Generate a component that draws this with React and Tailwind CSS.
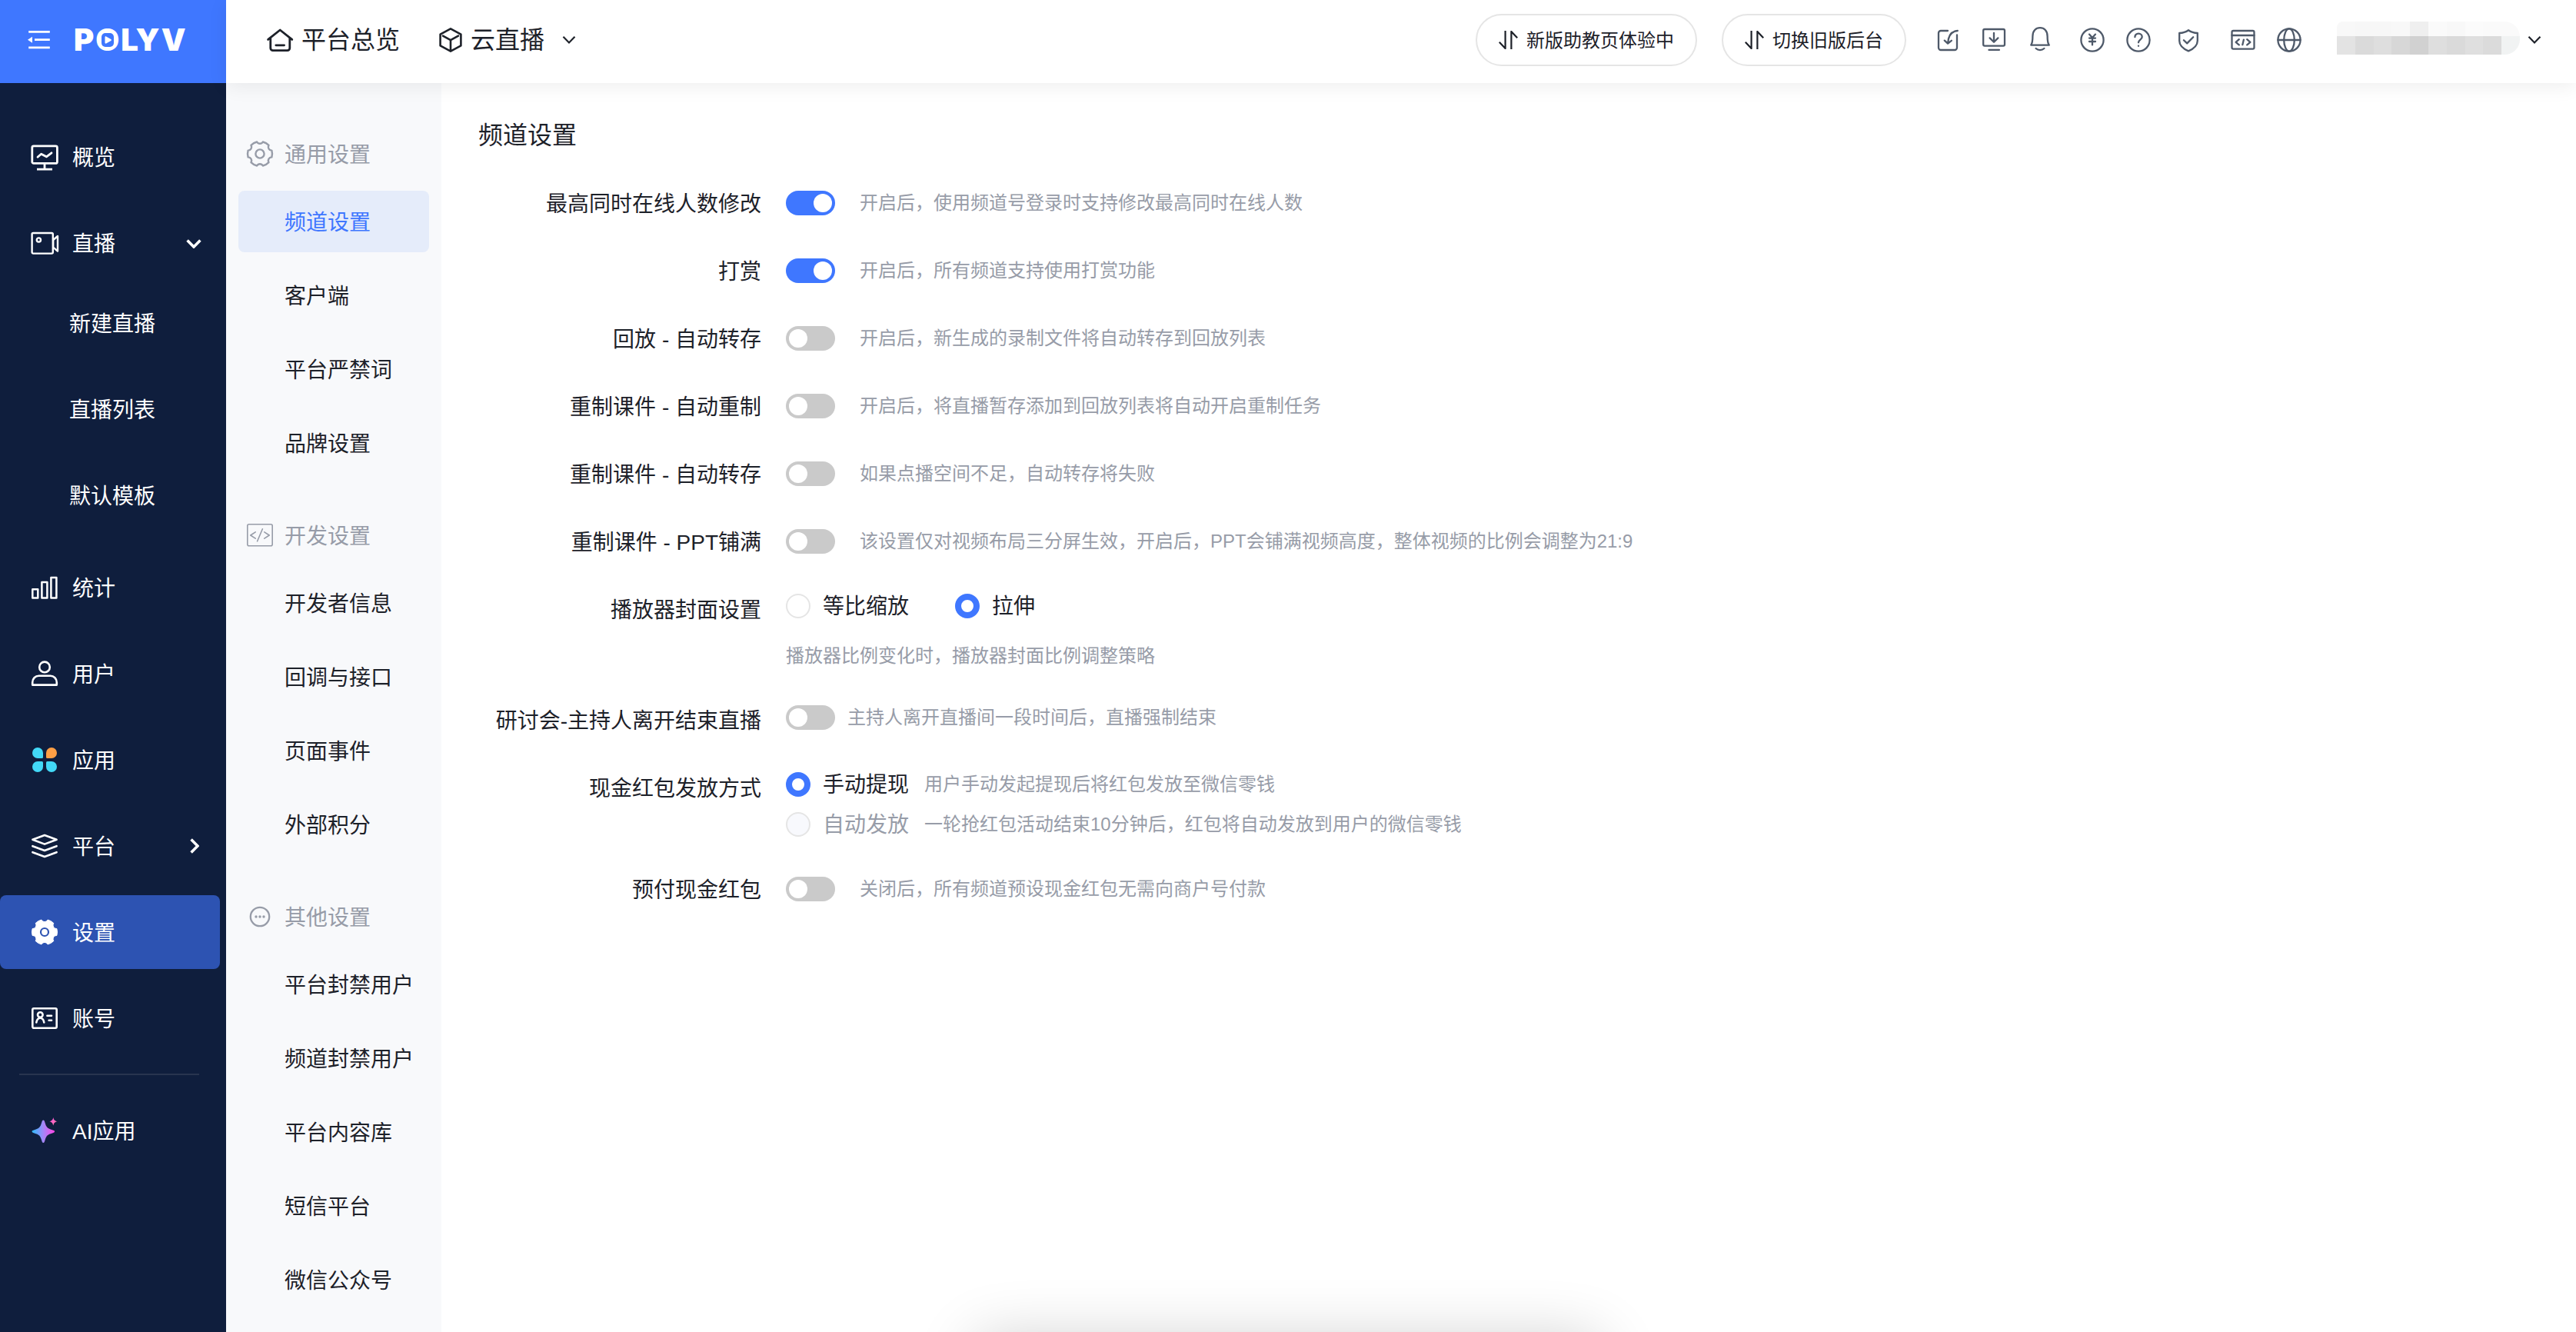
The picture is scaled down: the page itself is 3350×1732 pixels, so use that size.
import React from "react";

const rad = (deg) => (deg * Math.PI) / 180;

// Six-toothed gear outline: outer arcs joined by shallow concave notches.
function gearPath(c, R, half, bite) {
  const pt = (deg) => `${(c + R * Math.cos(rad(deg))).toFixed(2)} ${(c + R * Math.sin(rad(deg))).toFixed(2)}`;
  let d = `M${pt(-30 + half)}`;
  for (let k = 0; k < 6; k++) {
    const notch = 30 + 60 * k;
    d += `A${R} ${R} 0 0 1 ${pt(notch - half)}`;
    d += `A${bite} ${bite} 0 0 0 ${pt(notch + half)}`;
  }
  return d + "Z";
}

function Icon({ size = 36, sw = 2.8, className = "", children }) {
  return (
    <svg
      width={size}
      height={size}
      viewBox={`0 0 ${size} ${size}`}
      fill="none"
      stroke="currentColor"
      strokeWidth={sw}
      strokeLinecap="round"
      strokeLinejoin="round"
      className={`shrink-0 overflow-visible ${className}`}
    >
      {children}
    </svg>
  );
}

const navIcons = {
  overview: (
    <Icon>
      <rect x="1.8" y="3.8" width="32.6" height="22.6" rx="2" />
      <path d="M18 27v6.5M8 34.2h20" strokeLinecap="butt" />
      <path d="M9 18.2l4.6-4 6.8 3.6 6.6-5" />
    </Icon>
  ),
  live: (
    <Icon sw={2.4}>
      <rect x="1.6" y="5" width="27.2" height="26.6" rx="1.6" />
      <circle cx="10.4" cy="14" r="2.6" />
      <path d="M29.2 14l5.8-5v19.6l-5.8-5z" />
    </Icon>
  ),
  stats: (
    <Icon sw={2.5}>
      <rect x="2.3" y="20.2" width="7" height="11.4" />
      <rect x="14.4" y="11" width="7" height="20.6" />
      <rect x="26.4" y="5" width="7" height="26.6" />
    </Icon>
  ),
  user: (
    <Icon sw={2.6}>
      <circle cx="18" cy="9.4" r="6.8" />
      <path d="M2.2 32.6V29.4C2.2 24.400 5.800 20.800 10.600 20.800H25.400C30.200 20.800 33.800 24.400 33.800 29.400V32.600Z" />
    </Icon>
  ),
  apps: (
    <svg width="36" height="36" viewBox="0 0 36 36" className="shrink-0">
      <path d="M9 2a7 7 0 0 1 7 7v5.500a1.500 1.500 0 0 1-1.500 1.500h-5.500a7 7 0 0 1 0-14z" fill="#42d9f7" />
      <path d="M27 2a7 7 0 0 1 0 14h-5.500a1.500 1.500 0 0 1-1.500-1.500v-5.500a7 7 0 0 1 7-7z" fill="#ff9f45" />
      <path d="M9 34a7 7 0 0 1 0-14h5.500a1.500 1.500 0 0 1 1.500 1.500v5.500a7 7 0 0 1-7 7z" fill="#42d9f7" />
      <path d="M27 34a7 7 0 0 1-7-7v-5.500a1.500 1.500 0 0 1 1.500-1.500h5.500a7 7 0 0 1 0 14z" fill="#42d9f7" />
    </svg>
  ),
  platform: (
    <Icon sw={2.6}>
      <path d="M2.400 9.800L18 4l15.600 5.800L18 15.600z" />
      <path d="M2.400 18.200L18 24l15.600-5.800" />
      <path d="M2.400 26.200L18 32l15.600-5.800" />
    </Icon>
  ),
  settings: (
    <svg width="36" height="36" viewBox="0 0 36 36" className="shrink-0">
      <path d={gearPath(18, 16.5, 14.5, 4.6)} fill="white" stroke="white" strokeWidth="1" strokeLinejoin="round" />
      <circle cx="18" cy="18" r="5" fill="none" stroke="#2d53b2" strokeWidth="2.200" />
    </svg>
  ),
  account: (
    <Icon sw={2.600}>
      <rect x="2.300" y="5.300" width="31.400" height="25.400" rx="1.600" />
      <circle cx="12.300" cy="13.600" r="3.300" />
      <path d="M7.300 23.400c0.600-3.400 2.500-5.600 5-5.600s4.400 2.200 5 5.600M21.400 14.800h5.600M23.600 20.800h3.400" />
    </Icon>
  ),
  ai: (
    <svg width="36" height="36" viewBox="0 0 36 36" className="shrink-0">
      <defs>
        <linearGradient id="spark" x1="0" x2="1" y1="0" y2="0">
          <stop offset="0" stopColor="#2fbcff" />
          <stop offset="0.500" stopColor="#a387f7" />
          <stop offset="1" stopColor="#ff45e6" />
        </linearGradient>
        <linearGradient id="sparkSmall" x1="0" x2="1" y1="0" y2="1">
          <stop offset="0" stopColor="#ff4fe6" />
          <stop offset="1" stopColor="#ff7fa0" />
        </linearGradient>
      </defs>
      <path d="M16.300 4.600c1.200 0 1.500 1 2.100 3 1.700 6.200 3.400 7.900 9.600 9.600 2 .6 3 .9 3 2.100s-1 1.500-3 2.100c-6.200 1.700-7.900 3.400-9.600 9.600-.6 2-.9 3-2.100 3s-1.500-1-2.100-3c-1.700-6.200-3.400-7.900-9.600-9.600-2-.6-3-.9-3-2.100s1-1.500 3-2.100c6.200-1.700 7.900-3.400 9.600-9.600.6-2 .9-3 2.100-3z" fill="url(#spark)" />
      <path d="M29.300 1c.9 3.400 1.700 4.400 5.100 5.300-3.400.9-4.200 1.900-5.100 5.300-.9-3.400-1.700-4.400-5.100-5.300 3.400-.9 4.200-1.900 5.100-5.300z" fill="url(#sparkSmall)" />
    </svg>
  ),
};

const headerIcons = [
  {
    gap: "ml-[38px]",
    art: (
      <>
        <path d="M16 4H7a3 3 0 0 0-3 3v19a3 3 0 0 0 3 3h18a3 3 0 0 0 3-3V9.500" />
        <path d="M28.800 4c-7 .4-12 5.500-12.600 16M11.800 16.600l4.300 4 4.700-3.800" />
      </>
    ),
  },
  {
    gap: "ml-7",
    art: (
      <>
        <rect x="2.200" y="2" width="27.800" height="21.600" rx="1.800" />
        <path d="M9.500 28.900h13.400M16 6.800v11M10.600 13.400L16 18.800l5.400-5.400" />
      </>
    ),
  },
  {
    gap: "ml-7",
    art: (
      <>
        <path d="M4.200 22.600c2-2.600 2.200-4.600 2.200-11.600C6.400 4.200 10.500.2 16 .2s9.600 4 9.600 10.800c0 7 .2 9 2.200 11.600z" />
        <path d="M10.600 27c3 2.800 7.800 2.800 10.800 0" />
      </>
    ),
  },
  {
    gap: "ml-9",
    art: (
      <>
        <circle cx="16" cy="16" r="14.600" />
        <path d="M12 8.600l4 4.400 4-4.400M16 13v9.400M12 13.600h8M12 18h8" />
      </>
    ),
  },
  {
    gap: "ml-7",
    art: (
      <>
        <circle cx="16" cy="16" r="14.600" />
        <path d="M11.400 12.200c0-2.800 2-4.600 4.600-4.600s4.700 1.800 4.700 4.300c0 3.600-4.700 3.800-4.700 7.400M16 23.700v.1" />
      </>
    ),
  },
  {
    gap: "ml-[33px]",
    art: (
      <>
        <path d="M16 3.200c3.600 2.600 7.600 3.600 11.800 3.800V17c0 6-5.400 10.600-11.800 13.400C9.600 27.600 4.200 23 4.200 17V7C8.400 6.800 12.400 5.800 16 3.200z" />
        <path d="M9.900 16.200l4.300 4.200 8-8.200" />
      </>
    ),
  },
  {
    gap: "ml-[39px]",
    art: (
      <>
        <rect x="1.500" y="4" width="29" height="23.600" rx="1.800" />
        <path d="M1.500 10h29M10.800 15.200l-4.200 3.600 4.200 3.600M21.200 15.200l4.200 3.600-4.200 3.600M16.900 15.600l-1.600 6.600" />
      </>
    ),
  },
  {
    gap: "ml-7",
    art: (
      <>
        <circle cx="16" cy="16" r="14.600" />
        <ellipse cx="16" cy="16" rx="6.800" ry="14.600" />
        <path d="M1.400 16h29.200" />
      </>
    ),
  },
];

const mosaicTop = ["bg-[#f8f8f8]", "bg-[#f7f7f7]", "bg-[#f7f7f7]", "bg-[#f8f8f8]", "bg-[#efefef]", "bg-[#fafafa]", "bg-[#f8f8f8]", "bg-[#fbfbfb]", "bg-[#fafafa]", "bg-[#fafafa]"];
const mosaicBottom = ["bg-[#e3e3e3]", "bg-[#dadada]", "bg-[#dedede]", "bg-[#d7d7d7]", "bg-[#d1d1d1]", "bg-[#dedede]", "bg-[#dadada]", "bg-[#dfdfdf]", "bg-[#dbdbdb]", "bg-[#f1f3f3]"];

function Header() {
  return (
    <header className="relative z-10 flex h-[108px] shrink-0 items-center">
      <div className="flex h-full w-[294px] shrink-0 items-center bg-[#3f77ff] pb-1 pl-9 text-white">
        <svg width="30" height="26" viewBox="0 0 30 26" className="shrink-0" fill="none" stroke="currentColor" strokeWidth="2.800">
          <path d="M1.200 3h27.600M9 13.200h19.800M1.200 23.500h27.600" transform="translate(0 -0.600)" />
          <path d="M0 12.700l6-4v8z" fill="currentColor" stroke="none" />
        </svg>
        <div className="ml-[30px] h-[60px] whitespace-nowrap font-['Inter',sans-serif] text-[40px] font-black leading-[60px] tracking-[2px]">
          P
          <span className="relative inline-block">
            O
            <svg width="16" height="18" viewBox="0 0 16 18" className="absolute left-1/2 top-1/2 -ml-[9px] -mt-[9px]">
              <rect width="16" height="18" rx="5" fill="#3f77ff" />
              <path d="M4.500 5.400c0-1 .8-1.400 1.600-1l6.200 3.700c.8.5.8 1.300 0 1.800l-6.200 3.700c-.8.4-1.600 0-1.600-1z" fill="white" />
            </svg>
          </span>
          LYV
        </div>
      </div>
      <div className="flex h-full grow items-center bg-white pl-[52px] pb-1 shadow-[0_4px_24px_rgba(0,0,0,0.07)]">
        <Icon>
          <path d="M2.600 17.400L18.200 5l15.600 12.400M5.800 15.600v13a3 3 0 0 0 3 3h19a3 3 0 0 0 3-3v-13M12.800 24.800h10.800" />
        </Icon>
        <span className="ml-2.5 text-[32px] leading-[44px]">平台总览</span>
        <Icon size={32} sw={2.600} className="ml-[50px]">
          <path d="M16 1.400l13.400 7.300v14.600L16 30.600 2.600 23.300V8.700zM6 10.600l10 5.600 10-5.600M16 16.200v14" />
        </Icon>
        <span className="ml-2.5 text-[32px] leading-[44px]">云直播</span>
        <Chevron className="ml-[23px]" />
        <div className="ml-auto flex items-center">
          <Pill>新版助教页体验中</Pill>
          <Pill className="ml-8">切换旧版后台</Pill>
          {headerIcons.map((it, i) => (
            <Icon key={i} size={32} sw={2.300} className={`text-[#4e5969] ${it.gap}`}>
              {it.art}
            </Icon>
          ))}
          <div className="mb-[5px] ml-[46px] mr-2.5 flex h-[43px] w-[238px] flex-col overflow-hidden rounded-r-[20px] rounded-tl-lg">
            <div className="flex h-[19px]">{mosaicTop.map((c, i) => <i key={i} className={`grow basis-0 ${c}`} />)}</div>
            <div className="flex h-6">{mosaicBottom.map((c, i) => <i key={i} className={`grow basis-0 ${c}`} />)}</div>
          </div>
          <Chevron className="mr-[45px]" />
        </div>
      </div>
    </header>
  );
}

function Chevron({ className }) {
  return (
    <svg width="18" height="12" viewBox="0 0 18 12" className={`shrink-0 ${className}`} fill="none" stroke="#1d2129" strokeWidth="2.200">
      <path d="M1.500 1.800L9 9.400l7.500-7.600" />
    </svg>
  );
}

function Pill({ children, className = "" }) {
  return (
    <div className={`flex h-[68px] items-center rounded-full border-2 border-[#e5e5e5] pl-7 pr-7 text-[24px] leading-9 ${className}`}>
      <svg width="26" height="24" viewBox="0 0 26 24" className="mr-2.5 shrink-0" fill="none" stroke="#1d2129" strokeWidth="2.200" strokeLinejoin="round">
        <path d="M8.600 0v23L.8 14.800M16.400 24V1l7.800 8.200" />
      </svg>
      <span className="pt-px">{children}</span>
    </div>
  );
}

function NavItem({ icon, label, active, arrow, className = "" }) {
  return (
    <div className={`flex h-24 w-[286px] shrink-0 items-center rounded-lg pl-10 ${active ? "bg-[#2d53b2]" : ""} ${className}`}>
      {navIcons[icon]}
      <span className="ml-[18px] pt-[3px]">{label}</span>
      {arrow === "down" && (
        <svg width="20" height="12" viewBox="0 0 20 12" className="ml-auto mr-6 mt-px" fill="none" stroke="white" strokeWidth="3.600">
          <path d="M1.600 1.600L10 10l8.400-8.400" />
        </svg>
      )}
      {arrow === "right" && (
        <svg width="12" height="20" viewBox="0 0 12 20" className="ml-auto mr-[27px]" fill="none" stroke="white" strokeWidth="3.600">
          <path d="M1.600 1.600L10 10l-8.400 8.400" />
        </svg>
      )}
    </div>
  );
}

function Sidebar() {
  return (
    <nav className="flex w-[294px] shrink-0 flex-col gap-4 bg-[#0f1e3d] pt-12 text-[28px] leading-10 text-white">
      <NavItem icon="overview" label="概览" />
      <NavItem icon="live" label="直播" arrow="down" />
      {["新建直播", "直播列表", "默认模板"].map((t) => (
        <div key={t} className="-mt-2 mb-2 flex h-24 items-center pl-[90px] pt-[3px]">{t}</div>
      ))}
      <NavItem icon="stats" label="统计" />
      <NavItem icon="user" label="用户" />
      <NavItem icon="apps" label="应用" />
      <NavItem icon="platform" label="平台" arrow="right" />
      <NavItem icon="settings" label="设置" active />
      <NavItem icon="account" label="账号" />
      <div className="ml-[25px] mt-2 h-0.5 w-[234px] shrink-0 bg-[#28344f]" />
      <NavItem icon="ai" label="AI应用" className="mt-2" />
    </nav>
  );
}

const groups = [
  {
    title: "通用设置",
    icon: (
      <Icon sw={2.400}>
        <path d={gearPath(18, 16, 14, 4.4)} />
        <circle cx="18" cy="18" r="5.600" />
      </Icon>
    ),
    items: ["频道设置", "客户端", "平台严禁词", "品牌设置"],
  },
  {
    title: "开发设置",
    icon: (
      <Icon sw={1.600}>
        <rect x="1.800" y="3.800" width="32.400" height="28" rx="2" />
        <path d="M12.200 13.800l-6.400 4.200 6.400 4.200M23.800 13.800l6.400 4.200-6.400 4.200M21.400 9.800l-6.800 16" />
      </Icon>
    ),
    items: ["开发者信息", "回调与接口", "页面事件", "外部积分"],
  },
  {
    title: "其他设置",
    icon: (
      <Icon sw={2.300}>
        <circle cx="18" cy="18" r="12.200" />
        <path d="M13 18h.01M18 18h.01M23 18h.01" strokeWidth="3.400" />
      </Icon>
    ),
    items: ["平台封禁用户", "频道封禁用户", "平台内容库", "短信平台", "微信公众号"],
  },
];

function SubMenu() {
  return (
    <aside className="flex w-[280px] shrink-0 flex-col gap-10 bg-[#f8f9fb] px-4 pt-[52px] text-[28px] leading-10">
      {groups.map((g) => (
        <section key={g.title} className="flex shrink-0 flex-col">
          <div className="mb-2 flex h-20 items-center pl-2.5 text-[#979ca8]">
            {g.icon}
            <span className="ml-3.5 pt-[3px]">{g.title}</span>
          </div>
          <div className="flex flex-col gap-4">
            {g.items.map((t) => (
              <div key={t} className={`flex h-20 items-center whitespace-nowrap rounded-lg pl-[60px] pt-[3px] ${t === "频道设置" ? "bg-[#e5ecfa] text-[#3f77ff]" : ""}`}>
                {t}
              </div>
            ))}
          </div>
        </section>
      ))}
    </aside>
  );
}

function Toggle({ on }) {
  return (
    <div className={`flex h-8 w-16 shrink-0 items-center rounded-full px-1 ${on ? "justify-end bg-[#3f77ff]" : "bg-[#cacaca]"}`}>
      <div className="size-6 rounded-full bg-white" />
    </div>
  );
}

function Radio({ on, disabled, className = "" }) {
  return (
    <div className={`size-8 shrink-0 rounded-full ${on ? "border-8 border-[#3f77ff] bg-white" : disabled ? "border-2 border-[#e5e5e5] bg-[#f8f9fd]" : "border-2 border-[#e5e5e5] bg-white"} ${className}`} />
  );
}

function Row({ label, className = "", labelClass = "pt-0.5", children }) {
  return (
    <div className={`flex items-start ${className}`}>
      <div className={`-mb-1 mr-8 w-[416px] shrink-0 whitespace-nowrap text-right ${labelClass}`}>{label}</div>
      <div className="flex flex-col">{children}</div>
    </div>
  );
}

function ToggleLine({ on, desc, gap = "ml-8" }) {
  return (
    <div className="flex h-10 items-center">
      <Toggle on={on} />
      <Desc className={gap}>{desc}</Desc>
    </div>
  );
}

function Desc({ className = "", children }) {
  return <span className={`whitespace-nowrap text-[24px] leading-9 text-[#979ca8] ${className}`}>{children}</span>;
}

const toggles = [
  ["最高同时在线人数修改", true, "开启后，使用频道号登录时支持修改最高同时在线人数"],
  ["打赏", true, "开启后，所有频道支持使用打赏功能"],
  ["回放 - 自动转存", false, "开启后，新生成的录制文件将自动转存到回放列表"],
  ["重制课件 - 自动重制", false, "开启后，将直播暂存添加到回放列表将自动开启重制任务"],
  ["重制课件 - 自动转存", false, "如果点播空间不足，自动转存将失败"],
  ["重制课件 - PPT铺满", false, "该设置仅对视频布局三分屏生效，开启后，PPT会铺满视频高度，整体视频的比例会调整为21:9"],
];

function Main() {
  return (
    <main className="relative flex grow flex-col overflow-hidden bg-white text-[28px] leading-10">
      <h1 className="ml-12 mt-11 pt-px text-[32px] leading-[47px]">频道设置</h1>
      <div className="mt-11 flex flex-col gap-12">
        {toggles.map(([label, on, desc]) => (
          <Row key={label} label={label}>
            <ToggleLine on={on} desc={desc} />
          </Row>
        ))}
      </div>
      <Row label="播放器封面设置" className="mt-11" labelClass="pt-[6px]">
        <div className="flex h-10 items-center">
          <Radio />
          <span className="ml-4 pt-0.5">等比缩放</span>
          <Radio on className="ml-[60px]" />
          <span className="ml-4 pt-0.5">拉伸</span>
        </div>
        <Desc className="mt-[27px]">播放器比例变化时，播放器封面比例调整策略</Desc>
      </Row>
      <Row label="研讨会-主持人离开结束直播" className="mt-[42px]" labelClass="pt-[5px]">
        <ToggleLine desc="主持人离开直播间一段时间后，直播强制结束" gap="ml-4" />
      </Row>
      <Row label="现金红包发放方式" className="mt-[46px]" labelClass="pt-[6px]">
        <div className="flex h-10 items-center">
          <Radio on />
          <span className="ml-4 pt-0.5">手动提现</span>
          <Desc className="ml-5">用户手动发起提现后将红包发放至微信零钱</Desc>
        </div>
        <div className="mt-3 flex h-10 items-center text-[#979ca8]">
          <Radio disabled />
          <span className="ml-4 pt-0.5">自动发放</span>
          <Desc className="ml-5">一轮抢红包活动结束10分钟后，红包将自动发放到用户的微信零钱</Desc>
        </div>
      </Row>
      <Row label="预付现金红包" className="mt-11">
        <ToggleLine desc="关闭后，所有频道预设现金红包无需向商户号付款" />
      </Row>
      <div className="absolute -bottom-[210px] left-[696px] h-[200px] w-[810px] rounded-lg shadow-[0_0_80px_rgba(0,0,0,0.2)]" />
    </main>
  );
}

export default function App() {
  return (
    <div className="flex h-[1732px] w-[3350px] flex-col overflow-hidden bg-white font-['Liberation_Sans','Noto_Sans_CJK_SC',sans-serif] text-[#1d2129]">
      <Header />
      <div className="flex min-h-0 grow">
        <Sidebar />
        <SubMenu />
        <Main />
      </div>
    </div>
  );
}
